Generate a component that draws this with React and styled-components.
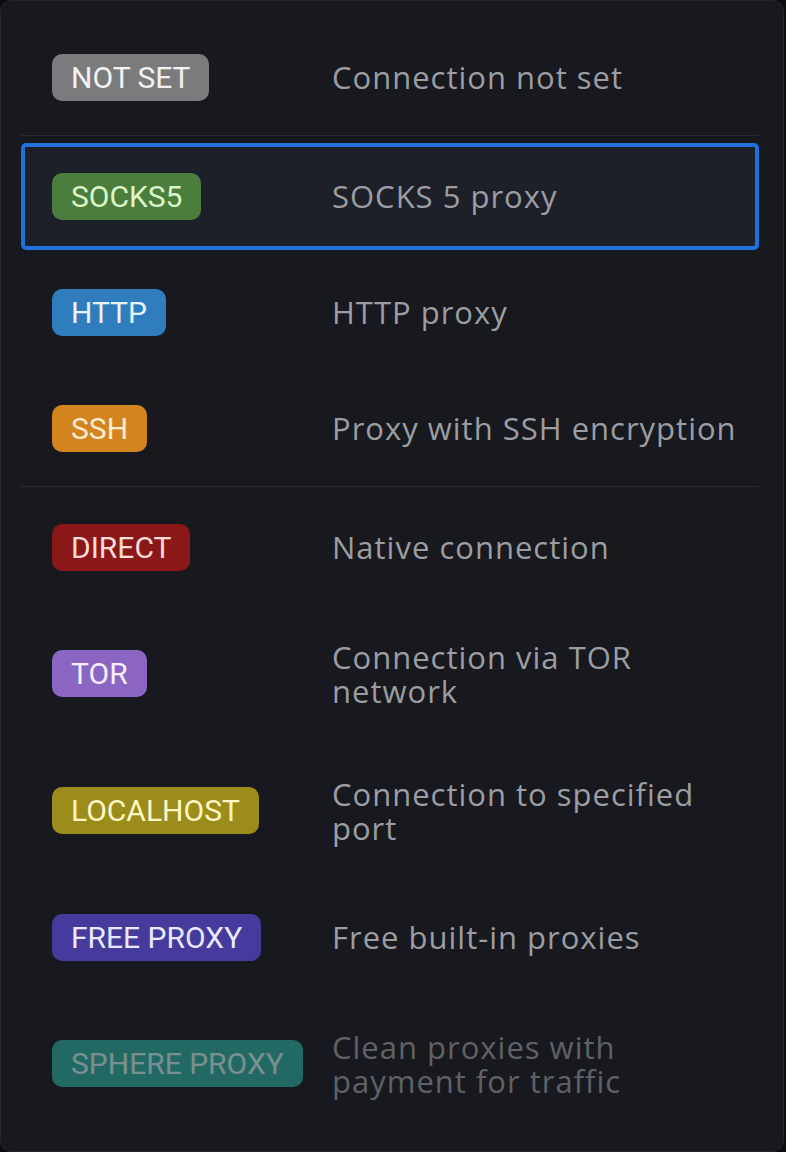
import React from 'react'
import styled, { createGlobalStyle } from 'styled-components'

const GlobalStyle = createGlobalStyle`
  html, body {
    margin: 0;
    padding: 0;
    background: #0d0d10;
  }
  body {
    font-family: Roboto, "Noto Sans", sans-serif;
    -webkit-font-smoothing: antialiased;
  }
`

const Panel = styled.div`
  box-sizing: border-box;
  width: 784px;
  padding: 18px 24px 19px 20px;
  background: #18191e;
  border: 1px solid #26272c;
  border-radius: 12px;
  display: flex;
  flex-direction: column;
`

const Row = styled.div`
  display: flex;
  align-items: center;
  margin: 4.5px 0;
  padding: 26px 0 26px 27px;
  border: 4px solid ${p => (p.$selected ? '#1f71dc' : 'transparent')};
  border-radius: 5px;
  background: ${p => (p.$selected ? '#1d2029' : 'transparent')};
  opacity: ${p => (p.$muted ? 0.55 : 1)};
`

const BadgeCell = styled.div`
  flex: 0 0 280px;
  display: flex;
  align-items: center;
`

const Badge = styled.span`
  display: inline-flex;
  align-items: center;
  height: 47px;
  padding: 0 19px;
  border-radius: 10px;
  background: ${p => p.$bg};
  color: ${p => p.$fg};
  font-size: 30px;
  white-space: nowrap;
`

const Description = styled.div`
  color: #9b9da3;
  font-family: "Open Sans", Roboto, sans-serif;
  font-size: 31px;
  letter-spacing: 1px;
  line-height: 34px;
  white-space: nowrap;
`

const Divider = styled.div`
  height: 1px;
  margin: 0 0 2px;
  background: #2a2b31;
`

const groups = [
  [
    { label: 'NOT SET', bg: '#7b7b7d', fg: '#f2f2f2', text: ['Connection not set'] },
  ],
  [
    { label: 'SOCKS5', bg: '#4b7d3c', fg: '#dbf5cb', text: ['SOCKS 5 proxy'], selected: true },
    { label: 'HTTP', bg: '#2f7dbd', fg: '#e8f3ff', text: ['HTTP proxy'] },
    { label: 'SSH', bg: '#d4841f', fg: '#ffeccf', text: ['Proxy with SSH encryption'] },
  ],
  [
    { label: 'DIRECT', bg: '#8b1818', fg: '#ffdcdc', text: ['Native connection'] },
    { label: 'TOR', bg: '#8a66c2', fg: '#f6eeff', text: ['Connection via TOR', 'network'] },
    { label: 'LOCALHOST', bg: '#9c8c1c', fg: '#fff7c6', text: ['Connection to specified', 'port'] },
    { label: 'FREE PROXY', bg: '#453b9c', fg: '#e8e8ff', text: ['Free built-in proxies'] },
    { label: 'SPHERE PROXY', bg: '#2dab9c', fg: '#c9f2ea', text: ['Clean proxies with', 'payment for traffic'], muted: true },
  ],
]

export default function App() {
  return (
    <>
      <GlobalStyle />
      <Panel>
        {groups.map((group, gi) => (
          <React.Fragment key={gi}>
            {gi > 0 && <Divider />}
            {group.map(item => (
              <Row key={item.label} $selected={item.selected} $muted={item.muted}>
                <BadgeCell>
                  <Badge $bg={item.bg} $fg={item.fg}>{item.label}</Badge>
                </BadgeCell>
                <Description>
                  {item.text.map((line, i) => (
                    <div key={i}>{line}</div>
                  ))}
                </Description>
              </Row>
            ))}
          </React.Fragment>
        ))}
      </Panel>
    </>
  )
}
